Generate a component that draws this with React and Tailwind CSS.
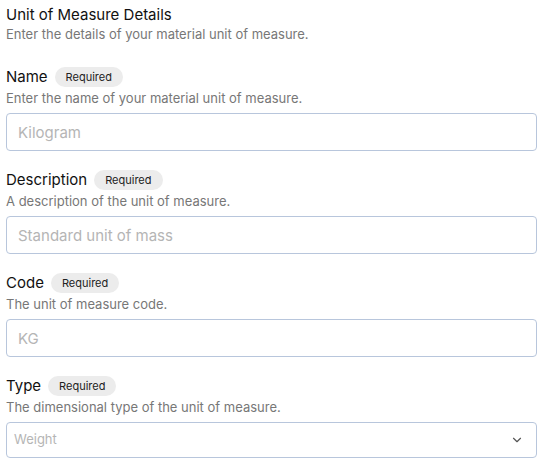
import { ChevronDown } from 'lucide-react';

const fields = [
  { label: 'Name', help: 'Enter the name of your material unit of measure.', placeholder: 'Kilogram' },
  { label: 'Description', help: 'A description of the unit of measure.', placeholder: 'Standard unit of mass' },
  { label: 'Code', help: 'The unit of measure code.', placeholder: 'KG' },
];

function Label({ text }) {
  return (
    <div className="flex items-center gap-[7px] h-[20px]">
      <span className="text-[15px] text-[#111]">{text}</span>
      <span className="rounded-full bg-[#ececec] px-[11px] h-[20px] flex items-center text-[11px] text-[#222]">Required</span>
    </div>
  );
}

export default function App() {
  return (
    <div className="bg-white min-h-screen pl-[6px] pr-[21px] pt-[5px]" style={{ fontFamily: 'Inter, "Open Sans", sans-serif' }}>
      <h2 className="text-[15px] leading-[20px] text-[#111]">Unit of Measure Details</h2>
      <p className="text-[13px] leading-[18px] text-[#777]">Enter the details of your material unit of measure.</p>

      <div className="mt-[24px] flex flex-col gap-[19px]">
        {fields.map((f) => (
          <div key={f.label}>
            <Label text={f.label} />
            <p className="text-[13px] leading-[20px] text-[#777] mt-[1px]">{f.help}</p>
            <input
              placeholder={f.placeholder}
              className="mt-[5px] w-full h-[38px] rounded-[4px] border border-[#b8c6dc] px-[11px] text-[15px] placeholder:text-[#b5b5b5] outline-none"
            />
          </div>
        ))}
        <div>
          <Label text="Type" />
          <p className="text-[13px] leading-[20px] text-[#777] mt-[1px]">The dimensional type of the unit of measure.</p>
          <div className="mt-[5px] w-full h-[36px] rounded-[4px] border border-[#b8c6dc] pl-[7px] pr-[12px] flex items-center justify-between">
            <span className="text-[13px] text-[#b5b5b5]">Weight</span>
            <ChevronDown size={14} className="text-[#555]" />
          </div>
        </div>
      </div>
    </div>
  );
}
